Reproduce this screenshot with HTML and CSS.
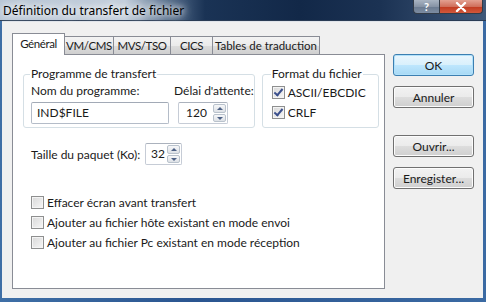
FILE: index.html
```html
<!DOCTYPE html>
<html lang="fr">
<head>
  <meta charset="UTF-8" />
  <title>Définition du transfert de fichier</title>
  <link rel="stylesheet" href="styles.css">
</head>
<body>
  <div class="window">
    <div class="titlebar">
      <span class="title">Définition du transfert de fichier</span>
      <div class="caption-btns">
        <span class="cap help">?</span>
        <span class="cap close">
          <svg width="14" height="10" viewBox="0 0 14 10"><path d="M3 1 L11 9 M11 1 L3 9" stroke="#fff" stroke-width="2.4" stroke-linecap="round"/></svg>
        </span>
      </div>
    </div>

    <div class="client">
      <!-- onglets -->
      <div class="tabctl">
        <div class="tabstrip">
          <span class="tab active">Général</span>
          <span class="tab t-vm">VM/CMS</span>
          <span class="tab t-mvs">MVS/TSO</span>
          <span class="tab t-cics">CICS</span>
          <span class="tab t-tables">Tables de traduction</span>
        </div>
        <div class="panel">
          <div class="groups">
            <fieldset class="group prog">
              <legend>Programme de transfert</legend>
              <div class="row">
                <div class="field">
                  <label>Nom du programme:</label>
                  <div class="textbox name">IND$FILE</div>
                </div>
                <div class="field">
                  <label>Délai d'attente:</label>
                  <div class="spin delay">
                    <span class="val">120</span>
                    <span class="arrows"><span class="up"></span><span class="down"></span></span>
                  </div>
                </div>
              </div>
            </fieldset>

            <fieldset class="group format">
              <legend>Format du fichier</legend>
              <div class="check"><span class="box checked"></span>ASCII/EBCDIC</div>
              <div class="check"><span class="box checked"></span>CRLF</div>
            </fieldset>
          </div>

          <div class="packet">
            <span class="packet-label">Taille du paquet (Ko):</span>
            <div class="spin small">
              <span class="val">32</span>
              <span class="arrows"><span class="up"></span><span class="down"></span></span>
            </div>
          </div>

          <div class="options">
            <div class="check"><span class="box"></span>Effacer écran avant transfert</div>
            <div class="check"><span class="box"></span>Ajouter au fichier hôte existant en mode envoi</div>
            <div class="check"><span class="box"></span>Ajouter au fichier Pc existant en mode réception</div>
          </div>
        </div>
      </div>

      <!-- boutons -->
      <div class="side">
        <button class="btn default">OK</button>
        <button class="btn">Annuler</button>
        <button class="btn gap">Ouvrir...</button>
        <button class="btn">Enregister...</button>
      </div>
    </div>
  </div>
</body>
</html>
```

FILE: styles.css
```css
html, body {
  margin: 0;
  padding: 0;
}
body {
  width: 486px;
  height: 302px;
  overflow: hidden;
  font-family: Lato, 'Noto Sans', sans-serif;
  font-size: 12px;
  color: #1a1a1a;
  white-space: nowrap;
}
.window {
  width: 486px;
  height: 302px;
  box-sizing: border-box;
  display: flex;
  flex-direction: column;
  background: linear-gradient(to right, #3f6fa6, #2a5590 40%, #3b6aa3);
  padding: 0 3px 4px 2px;
}
.titlebar {
  height: 21px;
  margin: 0 -3px 0 -2px;
  display: flex;
  justify-content: space-between;
  background: linear-gradient(to right, #b7c5d5 0, #c3cfdc 125px, #5a7290 165px, #1a3355 205px, #122848 300px, #1b3253 380px, #40597a 486px);
  border-bottom: 1px solid #2a3c55;
  box-sizing: border-box;
}
.title {
  padding: 3px 0 0 3px;
  line-height: 15px;
  font-family: 'Noto Sans', sans-serif;
  color: #000;
  text-shadow: 0 0 6px #fff, 0 0 10px #fff, 0 0 14px #eef3f8;
}
.caption-btns {
  display: flex;
  margin-right: 3px;
  height: 14px;
}
.cap {
  display: flex;
  align-items: center;
  justify-content: center;
  height: 13px;
  border: 1px solid #333c48;
  border-top: none;
  color: #fff;
  font-weight: bold;
  font-size: 11px;
}
.help {
  width: 25px;
  border-radius: 0 0 0 4px;
  border-right: none;
  background: linear-gradient(#a9b4c2, #8794a6 50%, #6b7b90 51%, #7c8ca2);
}
.close {
  width: 42px;
  border-radius: 0 0 4px 0;
  background: linear-gradient(#e3a091, #d0705c 50%, #c0391f 51%, #d2583c);
}
.client {
  flex: 1;
  background: #f0f0f0;
  display: flex;
  border-top: 1px solid #e0e4ea;
}
.tabctl {
  margin: 11px 0 0 10px;
  width: 373px;
}
.tabstrip {
  display: flex;
  align-items: flex-end;
  height: 21px;
  position: relative;
  z-index: 1;
}
.tab {
  height: 18px;
  box-sizing: border-box;
  line-height: 17px;
  text-align: center;
  font-size: 11.5px;
  letter-spacing: -0.4px;
  border: 1px solid #898c95;
  border-bottom: none;
  margin-left: -1px;
  background: linear-gradient(#f3f3f3, #ebebeb 50%, #dddddd 51%, #cfcfcf);
}
.tab.active {
  width: 53px;
  padding-top: 1px;
  margin: 0 0 -1px 0;
  background: #fff;
  position: relative;
  z-index: 2;
  height: 22px;
}
.t-vm { width: 50px; }
.t-mvs { width: 58px; }
.t-cics { width: 43px; }
.t-tables { width: 108px; letter-spacing: 0; }
.panel {
  height: 235px;
  box-sizing: border-box;
  background: #fff;
  border: 1px solid #898c95;
  padding: 11px 0 0 10px;
}
.groups {
  display: flex;
  gap: 7px;
}
fieldset.group {
  margin: 0;
  border: 1px solid #d5dfe5;
  border-radius: 3px;
  padding: 0 0 0 7px;
  height: 62px;
  box-sizing: border-box;
}
.group legend {
  padding: 0 1px;
  margin-left: -1px;
  line-height: 16px;
}
.prog {
  width: 229px;
}
.format {
  width: 117px;
  padding-left: 9px !important;
}
.row {
  display: flex;
  gap: 5px;
  margin-top: 1px;
}
.field label {
  display: block;
  line-height: 16px;
  margin-bottom: 3px;
}
.textbox {
  width: 138px;
  height: 22px;
  box-sizing: border-box;
  border: 1px solid #b4bcc8;
  border-top-color: #a2aab6;
  border-radius: 2px;
  padding: 0 0 0 5px;
  line-height: 20px;
}
.spin {
  display: flex;
  height: 22px;
  box-sizing: border-box;
  border: 1px solid #c6ccd6;
  border-top-color: #abb2bd;
  border-radius: 2px;
}
.delay {
  width: 50px;
  margin-left: 4px;
}
.spin .val {
  flex: 1;
  padding-left: 7px;
  line-height: 20px;
}
.spin.small .val {
  padding-left: 5px;
}
.arrows {
  width: 13px;
  display: flex;
  flex-direction: column;
  padding: 1px 1px 1px 0;
  gap: 1px;
}
.arrows span {
  flex: 1;
  border: 1px solid #b9c2cc;
  border-radius: 2px;
  background: linear-gradient(#f6f7f9, #dde1e6);
  position: relative;
}
.arrows span::after {
  content: "";
  position: absolute;
  left: 3px;
  top: 2px;
  border-left: 3px solid transparent;
  border-right: 3px solid transparent;
}
.arrows .up::after {
  border-bottom: 3px solid #4d6185;
}
.arrows .down::after {
  border-top: 3px solid #4d6185;
}
.check {
  display: flex;
  align-items: center;
  height: 20px;
}
.box {
  width: 13px;
  height: 13px;
  box-sizing: border-box;
  border: 1px solid #8e8f8f;
  background: linear-gradient(135deg, #d8d8d8, #f6f6f6);
  box-shadow: inset 0 0 0 1px #f4f4f4;
  margin-right: 3px;
  position: relative;
}
.box.checked::after {
  content: "";
  position: absolute;
  left: 3px;
  top: 0;
  width: 3px;
  height: 7px;
  border-right: 2px solid #3b4f8c;
  border-bottom: 2px solid #3b4f8c;
  transform: rotate(40deg);
}
.packet {
  display: flex;
  align-items: center;
  margin-top: 15px;
  padding-left: 8px;
}
.packet-label {
  width: 114px;
}
.small {
  width: 37px;
}
.options {
  margin-top: 27px;
  padding-left: 8px;
}
.side {
  display: flex;
  flex-direction: column;
  margin-left: 8px;
  padding-top: 32px;
  gap: 10px;
}
.btn {
  width: 81px;
  height: 22px;
  font-family: inherit;
  font-size: 12px;
  color: #1a1a1a;
  padding: 0;
  border: 1px solid #707070;
  border-radius: 3px;
  background: linear-gradient(#f2f2f2, #ebebeb 50%, #dddddd 51%, #cfcfcf);
  box-shadow: inset 0 0 0 1px #fcfcfc;
}
.btn.default {
  border-color: #3c7fb1;
  background: linear-gradient(#eaf6fd, #d9f0fc 50%, #bee6fd 51%, #a7d9f5);
  box-shadow: inset 0 0 0 1px #b2e1fa;
}
.btn.gap {
  margin-top: 17px;
}
```
